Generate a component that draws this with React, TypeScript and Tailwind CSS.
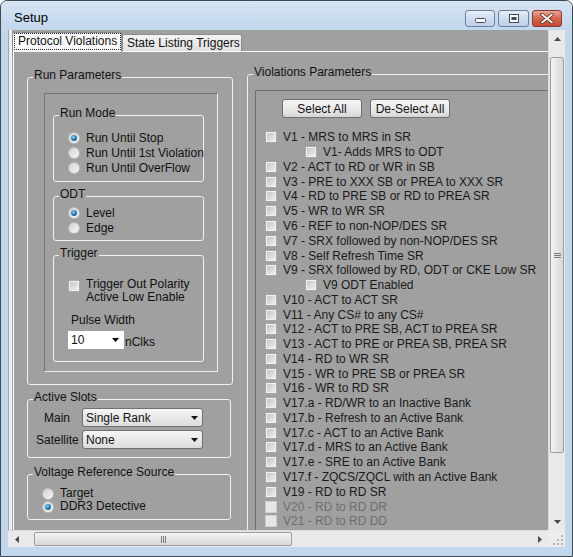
import React from 'react';

type Row = { label: string; sub?: boolean; disabled?: boolean };

const violations: Row[] = [
  { label: 'V1 - MRS to MRS in SR' },
  { label: 'V1- Adds MRS to ODT', sub: true },
  { label: 'V2 - ACT to RD or WR in SB' },
  { label: 'V3 - PRE to XXX SB or PREA to XXX SR' },
  { label: 'V4 - RD to PRE SB or RD to PREA SR' },
  { label: 'V5 - WR to WR SR' },
  { label: 'V6 - REF to non-NOP/DES SR' },
  { label: 'V7 - SRX followed by non-NOP/DES SR' },
  { label: 'V8 - Self Refresh Time SR' },
  { label: 'V9 - SRX followed by RD, ODT or CKE Low SR' },
  { label: 'V9 ODT Enabled', sub: true },
  { label: 'V10 - ACT to ACT SR' },
  { label: 'V11 - Any CS# to any CS#' },
  { label: 'V12 - ACT to PRE SB, ACT to PREA SR' },
  { label: 'V13 - ACT to PRE or PREA SB, PREA SR' },
  { label: 'V14 - RD to WR SR' },
  { label: 'V15 - WR to PRE SB or PREA SR' },
  { label: 'V16 - WR to RD SR' },
  { label: 'V17.a - RD/WR to an Inactive Bank' },
  { label: 'V17.b - Refresh to an Active Bank' },
  { label: 'V17.c - ACT to an Active Bank' },
  { label: 'V17.d - MRS to an Active Bank' },
  { label: 'V17.e - SRE to an Active Bank' },
  { label: 'V17.f - ZQCS/ZQCL with an Active Bank' },
  { label: 'V19 - RD to RD SR' },
  { label: 'V20 - RD to RD DR', disabled: true },
  { label: 'V21 - RD to RD DD', disabled: true },
  { label: '', disabled: true },
];

const Check = ({ disabled }: { disabled?: boolean }) =>
  disabled ? (
    <span className="block w-[12px] h-[12px] shrink-0 border border-[#cdcdcd] bg-[#e6e6e6]" />
  ) : (
    <span className="block w-[12px] h-[12px] shrink-0 border border-[#a6a6a6] bg-[#f2f2f2] p-[1px]">
      <span className="block w-full h-full bg-linear-to-br from-[#c6c6c6] to-[#eeeeee]" />
    </span>
  );

const Radio = ({ on }: { on?: boolean }) => (
  <span className="flex items-center justify-center w-[12px] h-[12px] shrink-0 rounded-full border border-[#bcbcbc] bg-linear-to-br from-[#d2d2d2] to-[#f8f8f8]">
    {on && (
      <span className="block w-[6px] h-[6px] rounded-full bg-[radial-gradient(circle_at_40%_35%,#8ad0f5,#1f70ab_55%,#0b3d66)]" />
    )}
  </span>
);

const Group = ({
  label,
  className = '',
  children,
}: {
  label: string;
  className?: string;
  children?: React.ReactNode;
}) => (
  <div className={`relative shrink-0 border border-[#f0f0f0] rounded-[3px] ${className}`}>
    <span className="absolute left-[5px] top-[-10px] px-[1px] leading-[14px] bg-[#a0a0a0] whitespace-nowrap">
      {label}
    </span>
    {children}
  </div>
);

const Tri = ({ dir }: { dir: 'up' | 'down' | 'left' | 'right' }) => {
  const pts = {
    up: '0,4 3.5,0 7,4',
    down: '0,0 7,0 3.5,4',
    left: '4,0 4,7 0,3.5',
    right: '0,0 4,3.5 0,7',
  }[dir];
  const vertical = dir === 'up' || dir === 'down';
  return (
    <svg width={vertical ? 7 : 4} height={vertical ? 4 : 7}>
      <polygon points={pts} fill="#4a4a4a" />
    </svg>
  );
};

const RadioRow = ({ on, text, h, lh = 'leading-[14px]' }: { on?: boolean; text: string; h: string; lh?: string }) => (
  <div className={`flex items-center gap-[6px] ${h}`}>
    <Radio on={on} />
    <span className={`${lh} whitespace-nowrap`}>{text}</span>
  </div>
);

const Combo = ({ value }: { value: string }) => (
  <div className="w-[121px] h-[19px] rounded-[3px] border border-[#707070] bg-linear-to-b from-[#f6f6f6] to-[#dcdcdc] flex items-center justify-between pl-[3px] pr-[4px]">
    <span className="leading-[14px]">{value}</span>
    <svg width="7" height="4">
      <polygon points="0,0 7,0 3.5,4" fill="#111" />
    </svg>
  </div>
);

const WinButton = ({ children }: { children: React.ReactNode }) => (
  <div className="w-[80px] h-[19px] rounded-[3px] border border-[#707070] bg-linear-to-b from-[#f4f4f4] via-[#ebebeb] to-[#d6d6d6] flex items-center justify-center leading-[14px]">
    {children}
  </div>
);

const VScroll = () => (
  <div className="w-[17px] h-[500px] shrink-0 flex flex-col bg-[#e9e9e9] border-l border-[#dadada]">
    <div className="h-[17px] flex items-center justify-center">
      <Tri dir="up" />
    </div>
    <div className="h-[10px]" />
    <div className="h-[396px] mx-[1px] rounded-[2px] border border-[#9d9d9d] bg-linear-to-r from-[#f4f4f4] to-[#d8d8d8] flex flex-col items-center justify-center gap-[1px]">
      <span className="block w-[7px] h-[1px] bg-[#7a7a7a]" />
      <span className="block w-[7px] h-[1px] bg-[#7a7a7a]" />
      <span className="block w-[7px] h-[1px] bg-[#7a7a7a]" />
    </div>
    <div className="flex-1" />
    <div className="h-[17px] flex items-center justify-center">
      <Tri dir="down" />
    </div>
  </div>
);

const HScroll = () => (
  <div className="w-[540px] h-[17px] shrink-0 flex bg-[#e9e9e9] border-t border-[#dadada]">
    <div className="w-[17px] flex items-center justify-center">
      <Tri dir="left" />
    </div>
    <div className="w-[9px]" />
    <div className="w-[258px] my-[1px] rounded-[2px] border border-[#9d9d9d] bg-linear-to-b from-[#f4f4f4] to-[#d8d8d8] flex items-center justify-center gap-[1px]">
      <span className="block w-[1px] h-[7px] bg-[#7a7a7a]" />
      <span className="block w-[1px] h-[7px] bg-[#7a7a7a]" />
      <span className="block w-[1px] h-[7px] bg-[#7a7a7a]" />
    </div>
    <div className="flex-1" />
    <div className="w-[17px] flex items-center justify-center">
      <Tri dir="right" />
    </div>
  </div>
);

const SizeGrip = () => (
  <div className="w-[17px] h-[17px] bg-[#ececec] flex items-end justify-end p-[2px]">
    <svg width="11" height="11">
      {[
        [8, 0],
        [8, 4],
        [4, 4],
        [8, 8],
        [4, 8],
        [0, 8],
      ].map(([x, y]) => (
        <rect key={`${x}-${y}`} x={x + 1} y={y + 1} width="2" height="2" fill="#b5b5b5" />
      ))}
    </svg>
  </div>
);

export default function App() {
  return (
    <div className="w-[573px] h-[557px] flex flex-col bg-[#c2d6ec] border border-[#3f4a57] rounded-t-[7px] overflow-hidden font-['Liberation_Sans',Arial,sans-serif] text-[12px] text-[#111]">
      {/* caption */}
      <div className="h-[29px] shrink-0 flex justify-between pl-[13px] pr-[10px] bg-linear-to-b from-[#d6e4f4] to-[#c2d6ec]">
        <span className="pt-[9px] text-[13px] leading-[16px] text-black">Setup</span>
        <div className="flex gap-[3px] pt-[9px]">
          <div className="w-[30px] h-[17px] rounded-[3px] border border-[#6c7f99] bg-linear-to-b from-[#e6eef8] via-[#cfdcee] to-[#bfd1e9] flex items-end justify-center pb-[3px]">
            <svg width="11" height="5">
              <rect x="0.5" y="0.5" width="10" height="4" rx="1" fill="#fff" stroke="#3d4b5e" />
            </svg>
          </div>
          <div className="w-[31px] h-[17px] rounded-[3px] border border-[#6c7f99] bg-linear-to-b from-[#e6eef8] via-[#cfdcee] to-[#bfd1e9] flex items-center justify-center">
            <svg width="10" height="9">
              <rect x="0.5" y="0.5" width="9" height="8" fill="#fff" stroke="#3d4b5e" />
              <rect x="2.5" y="3" width="5" height="3" fill="#3d4b5e" />
            </svg>
          </div>
          <div className="w-[30px] h-[17px] rounded-[3px] border border-[#873a2e] bg-linear-to-b from-[#eaa898] via-[#d5644e] to-[#c54a33] flex items-center justify-center">
            <svg width="14" height="11">
              <path d="M2 1.5 L12 9.5 M12 1.5 L2 9.5" stroke="#5a2218" strokeWidth="3.4" strokeLinecap="round" />
              <path d="M2 1.5 L12 9.5 M12 1.5 L2 9.5" stroke="#fff" strokeWidth="1.8" strokeLinecap="round" />
            </svg>
          </div>
        </div>
      </div>

      {/* body */}
      <div className="flex-1 flex px-[7px] pb-[9px]">
        <div className="w-[557px] h-[517px] flex flex-col">
          <div className="flex h-[500px]">
            <div className="w-[540px] h-[500px] overflow-hidden flex bg-[#a0a0a0]">
              <div className="w-[4px] shrink-0 border-l border-[#96a6bb] bg-[#efefef]" />

              {/* tab control */}
              <div className="w-[620px] shrink-0 flex flex-col">
                <div className="h-[21px] shrink-0 flex items-end">
                  <div className="relative z-10 mb-[-1px] w-[110px] h-[20px] border border-b-0 border-[#898c93] bg-[#fbfbfb] rounded-t-[2px] flex items-start pl-[1px]">
                    <span className="h-[17px] px-[3px] border border-dotted border-[#222] leading-[15px] whitespace-nowrap">
                      Protocol Violations
                    </span>
                  </div>
                  <div className="w-[120px] h-[17px] border border-b-0 border-[#898c93] bg-linear-to-b from-[#f4f4f4] to-[#e0e0e0] rounded-t-[2px] flex items-center pl-[4px] leading-[14px] whitespace-nowrap">
                    State Listing Triggers
                  </div>
                </div>

                {/* tab page */}
                <div className="ml-[1px] flex-1 flex items-start bg-[#a0a0a0] border-l border-t border-white">
                  {/* left column */}
                  <div className="ml-[13px] mt-[25px] w-[206px] shrink-0 flex flex-col">
                    <Group label="Run Parameters" className="w-[206px] h-[308px] pl-[16px] pt-[15px]">
                      <div className="w-[174px] h-[279px] flex flex-col pl-[8px] pt-[21px] border border-[#727272] border-r-[#ededed] border-b-[#ededed]">
                        <Group label="Run Mode" className="w-[151px] h-[67px] pl-[14px] pt-[14px]">
                          <RadioRow on text="Run Until Stop" h="h-[15px]" />
                          <RadioRow text="Run Until 1st Violation" h="h-[15px]" />
                          <RadioRow text="Run Until OverFlow" h="h-[15px]" />
                        </Group>
                        <Group label="ODT" className="mt-[14px] w-[151px] h-[45px] pl-[14px] pt-[8px]">
                          <RadioRow on text="Level" h="h-[15px]" />
                          <RadioRow text="Edge" h="h-[15px]" />
                        </Group>
                        <Group label="Trigger" className="mt-[14px] w-[151px] h-[107px] pl-[14px] pt-[22px] flex flex-col">
                          <div className="flex items-start gap-[6px]">
                            <span className="mt-[2px]">
                              <Check />
                            </span>
                            <span className="leading-[13px] whitespace-nowrap">
                              Trigger Out Polarity
                              <br />
                              Active Low Enable
                            </span>
                          </div>
                          <span className="mt-[9px] ml-[3px] leading-[14px]">Pulse Width</span>
                          <div className="mt-[4px] flex items-end">
                            <div className="w-[56px] h-[18px] bg-white flex items-center justify-between pl-[3px] pr-[5px]">
                              <span className="leading-[14px]">10</span>
                              <svg width="7" height="4">
                                <polygon points="0,0 7,0 3.5,4" fill="#000" />
                              </svg>
                            </div>
                            <span className="ml-[1px] leading-[14px]">nClks</span>
                          </div>
                        </Group>
                      </div>
                    </Group>

                    <Group label="Active Slots" className="mt-[14px] w-[204px] h-[59px] pt-[8px] flex flex-col">
                      <div className="flex items-center">
                        <span className="w-[54px] pl-[16px] leading-[14px]">Main</span>
                        <Combo value="Single Rank" />
                      </div>
                      <div className="mt-[3px] flex items-center">
                        <span className="w-[54px] pl-[8px] leading-[14px]">Satellite</span>
                        <Combo value="None" />
                      </div>
                    </Group>

                    <Group label="Voltage Reference Source" className="mt-[16px] w-[204px] h-[46px] pl-[14px] pt-[12px]">
                      <RadioRow text="Target" h="h-[13px]" lh="leading-[13px]" />
                      <RadioRow on text="DDR3 Detective" h="h-[13px]" lh="leading-[13px]" />
                    </Group>
                  </div>

                  {/* right column */}
                  <div className="ml-[14px] mt-[22px] shrink-0">
                    <Group label="Violations Parameters" className="w-[340px] h-[480px] pl-[7px] pt-[15px] flex flex-col">
                      <div className="w-[330px] flex-1 flex flex-col border-t border-l border-[#6e6e6e]">
                        <div className="mt-[8px] ml-[26px] flex gap-[8px]">
                          <WinButton>Select All</WinButton>
                          <WinButton>De-Select All</WinButton>
                        </div>
                        <div className="mt-[12px] pl-[9px] flex flex-col">
                          {violations.map((v, i) => (
                            <div
                              key={i}
                              className={`h-[14.78px] flex items-center gap-[6px] ${v.sub ? 'pl-[40px]' : ''}`}
                            >
                              <Check disabled={v.disabled} />
                              <span
                                className={`leading-[14px] whitespace-nowrap ${
                                  v.disabled ? 'text-[#6e6e6e]' : 'text-[#1a1a1a]'
                                }`}
                              >
                                {v.label}
                              </span>
                            </div>
                          ))}
                        </div>
                      </div>
                    </Group>
                  </div>
                </div>
              </div>
            </div>
            <VScroll />
          </div>
          <div className="flex h-[17px]">
            <HScroll />
            <SizeGrip />
          </div>
        </div>
      </div>
    </div>
  );
}
